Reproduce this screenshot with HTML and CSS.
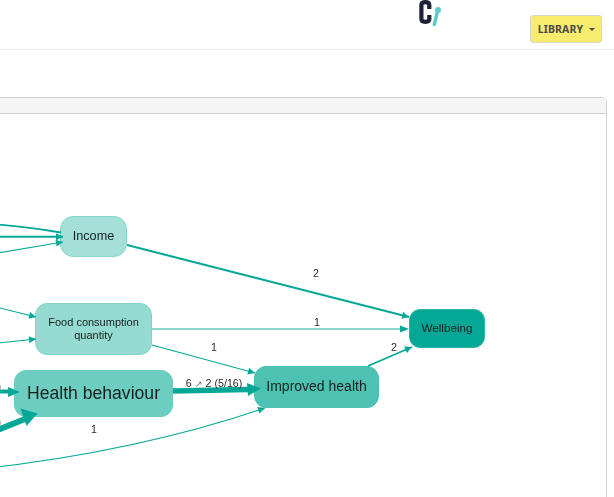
FILE: index.html
```html
<!DOCTYPE html>
<html lang="en">
<head>
<meta charset="utf-8">
<title>Library</title>
<link rel="stylesheet" href="styles.css">
</head>
<body>
<header class="topbar">
  <svg class="logo" viewBox="0 0 28 28" width="28" height="28" aria-label="logo">
    <path class="logo-c" d="M14.300 9V5C14.300 3 13 2.200 10.400 2.200S6.400 3 6.400 5V19C6.400 21 7.800 21.800 10.400 21.800S14.300 21 14.300 19V15"/>
    <path class="logo-bone" d="M22.800 10L19.300 24.500"/>
    <circle class="logo-dot" cx="23" cy="10" r="3"/>
  </svg>
  <button class="library-btn">LIBRARY<span class="caret"></span></button>
</header>
<main class="page">
  <section class="card">
    <div class="card-head"></div>
    <div class="canvas">
      <div class="node income">Income</div>
      <div class="node food">Food consumption<br>quantity</div>
      <div class="node health">Health behaviour</div>
      <div class="node improved">Improved health</div>
      <div class="node wellbeing">Wellbeing</div>
      <svg class="edges" viewBox="0 0 625 384" width="625" height="384">
        <defs>
          <marker id="tip" markerUnits="userSpaceOnUse" viewBox="0 0 10 10" refX="10" refY="5" markerWidth="9" markerHeight="7" orient="auto"><path class="tip" d="M0 0L10 5L0 10Z"/></marker>
        </defs>
        <g transform="translate(18 -114)">
          <path class="edge w2" d="M-20 223.500C10 225 35 228 61 232.500"/>
          <path class="edge w2" d="M-20 236.800H63" marker-end="url(#tip)"/>
          <path class="edge w1" d="M-20 256L63 242" marker-end="url(#tip)"/>
          <path class="edge w2" d="M127 245L409 317" marker-end="url(#tip)"/>
          <path class="edge w1" d="M-20 303L36 317" marker-end="url(#tip)"/>
          <path class="edge w1" d="M-20 345L36 339" marker-end="url(#tip)"/>
          <path class="edge w2 pale" d="M152 329H402"/>
          <path class="tip" d="M400 325.500L409 329L400 332.500Z"/>
          <path class="edge w1" d="M152 345L255 373" marker-end="url(#tip)"/>
          <path class="edge w2" d="M368 366L412 347" marker-end="url(#tip)"/>
          <path class="edge w5" d="M173 391L248 389.500"/>
          <path class="tip" d="M247 383L261 388.500L248 396Z"/>
          <path class="edge w4" d="M-20 391.500H10"/>
          <path class="tip" d="M8 387L20 392L8 397Z"/>
          <path class="edge w6" d="M-20 437L25 419"/>
          <path class="tip" d="M20.500 408.500L37.500 413.500L26.500 426Z"/>
          <path class="edge w1" d="M-20 469C80 458 180 437 265 408" marker-end="url(#tip)"/>
        </g>
      </svg>
      <span class="label l1">2</span>
      <span class="label l2">1</span>
      <span class="label l3">1</span>
      <span class="label l4">2</span>
      <span class="label l5">6 <span class="arr">↗</span> 2 (5/16)</span>
      <span class="label l6">1</span>
      <span class="label cut c1">)</span>
      <span class="label cut c2">)</span>
    </div>
  </section>
</main>
</body>
</html>
```
FILE: styles.css
```css
html, body { margin: 0; height: 100%; overflow: hidden; background: #fff; }
body { font-family: "Liberation Sans", Arial, sans-serif; color: #212529; }
.topbar { position: relative; height: 49px; border-bottom: 1px solid #eceeee; }
.logo { position: absolute; left: 415px; top: 0; }
.logo-c { fill: none; stroke: #1f2137; stroke-width: 4.200; }
.logo-bone { fill: none; stroke: #5ccbc8; stroke-width: 3.400; stroke-linecap: round; }
.logo-dot { fill: #5ccbc8; }
.library-btn {
  position: absolute; left: 530px; top: 15px; width: 72px; height: 28px; padding: 0 0 0 1px;
  display: flex; align-items: center; justify-content: center;
  background: #f8ec6e; border: 1px solid #d8d8c8; border-radius: 3px;
  font: 700 10.500px "Noto Sans", sans-serif; color: #4a4a4a; letter-spacing: .15px;
}
.caret { margin-left: 6px; border-top: 3.500px solid #4a4a4a; border-left: 3.500px solid transparent; border-right: 3.500px solid transparent; }
.page { padding-top: 47px; }
.card { margin-left: -18px; width: 625px; box-sizing: border-box; height: 420px; border: 1px solid #cfcfcf; border-radius: 6px; overflow: hidden; }
.card-head { height: 15px; background: #f5f5f5; border-bottom: 1px solid #cfcfcf; }
.canvas { position: relative; height: 384px; }
.edges { position: absolute; left: -1px; top: 0; z-index: 1; }
.edge { fill: none; stroke: #05a896; }
.tip { fill: #05a896; }
.pale { stroke: #8cd8ce; }
.w1 { stroke-width: 1.100; }
.w2 { stroke-width: 1.900; }
.w4 { stroke-width: 4; }
.w5 { stroke-width: 5.500; }
.w6 { stroke-width: 6; }
.node { position: absolute; box-sizing: border-box; display: flex; align-items: center; justify-content: center; text-align: center; color: #16201f; border-style: solid; border-width: 1px; will-change: transform; }
.income { left: 77px; top: 102px; width: 67px; height: 41px; padding-bottom: 2px; border-radius: 13px; font-size: 12.700px; background: #a4e0d8; border-color: #86d6cb; }
.food { left: 52px; top: 189px; width: 117px; height: 52px; border-radius: 12px; font-size: 11px; line-height: 13px; background: #95dbd1; border-color: #82d4c9; }
.health { left: 31px; top: 256px; width: 159px; height: 47px; border-radius: 12px; font-size: 17.600px; background: #6ecdc1; border-color: #68ccbf; }
.improved { left: 271px; top: 252px; width: 125px; height: 42px; padding-bottom: 2px; border-radius: 12px; font-size: 14px; background: #4dc1b2; border-color: #4dc1b2; }
.wellbeing { left: 426px; top: 195px; width: 76px; height: 39px; padding-bottom: 2px; border-radius: 11px; font-size: 11.700px; background: #05a896; border-color: #2db5a5; }
.label { position: absolute; z-index: 2; font-size: 10.700px; line-height: 12px; color: #2a2a2a; white-space: nowrap; transform: translateX(-50%); will-change: transform; }
.arr { color: #777; font-size: 9px; }
.l1 { left: 333px; top: 153px; }
.l2 { left: 334px; top: 202px; }
.l3 { left: 231px; top: 227px; }
.l4 { left: 411px; top: 227px; }
.l5 { left: 231px; top: 263px; }
.l6 { left: 111px; top: 309px; }
.cut { left: 18px; transform: translateX(-100%); }
.c1 { top: 266px; }
.c2 { top: 302px; }
```
